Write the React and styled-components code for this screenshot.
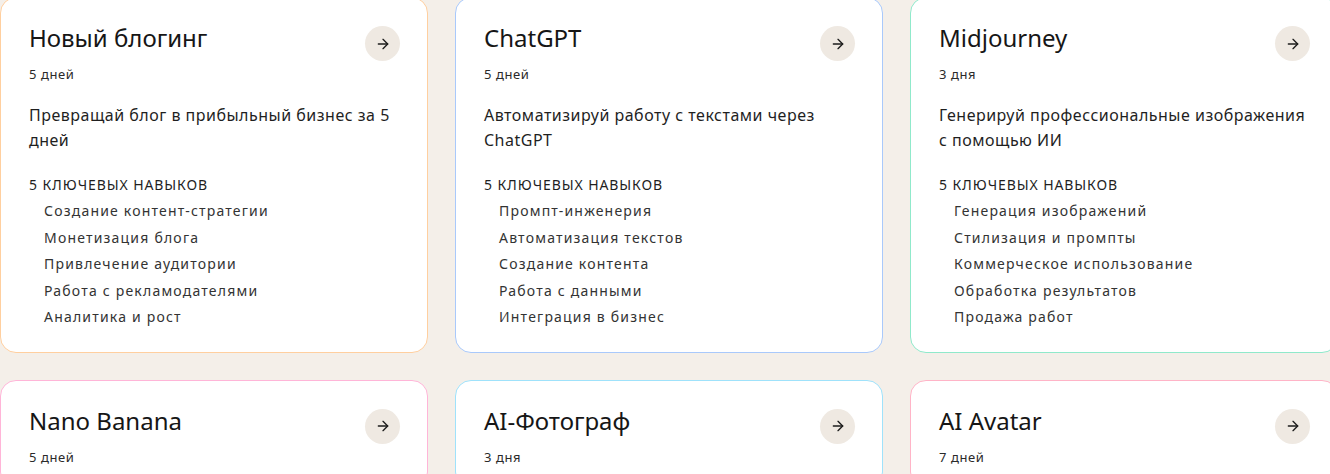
import styled, { createGlobalStyle } from "styled-components";
import { ArrowRight } from "lucide-react";

const GlobalStyle = createGlobalStyle`
  html, body {
    margin: 0;
    padding: 0;
    background-color: #f4efe9;
    overflow: hidden;
  }
  body {
    font-family: "Noto Sans", "DejaVu Sans", sans-serif;
    color: #1c1c1c;
  }
`;

const Grid = styled.div`
  display: grid;
  grid-template-columns: repeat(3, 428px);
  gap: 27px;
  margin-top: -3px;
  width: 1340px;
`;

const Card = styled.div`
  background-color: #ffffff;
  border: 1px solid ${(p) => p.$accent};
  border-radius: 16px;
  padding: 24px 27px 21px 28px;
  box-sizing: border-box;
`;

const Header = styled.div`
  display: flex;
  justify-content: space-between;
  align-items: flex-start;
`;

const Title = styled.h3`
  margin: 0;
  font-size: 24px;
  line-height: 32px;
  font-weight: 400;
  color: #161616;
`;

const ArrowButton = styled.button`
  width: 35px;
  height: 35px;
  margin-top: 4px;
  border: none;
  border-radius: 50%;
  background-color: #efe9e2;
  color: #1c1c1c;
  display: flex;
  align-items: center;
  justify-content: center;
  padding: 0;
  flex-shrink: 0;
`;

const Duration = styled.div`
  margin-top: 4px;
  font-size: 13px;
  line-height: 18px;
  letter-spacing: 0.6px;
  color: #2a2a2a;
`;

const Description = styled.p`
  margin: 20px 0 0;
  font-size: 16px;
  line-height: 25px;
  letter-spacing: 0.5px;
  color: #1f1f1f;
`;

const SkillsTitle = styled.div`
  margin-top: 22px;
  font-size: 14px;
  line-height: 20px;
  text-transform: uppercase;
  letter-spacing: 0.9px;
  color: #1f1f1f;
`;

const SkillList = styled.ul`
  list-style: none;
  margin: 3px 0 0;
  padding: 0 0 0 15px;
`;

const Skill = styled.li`
  font-size: 14px;
  line-height: 26.5px;
  letter-spacing: 1.2px;
  color: #333333;
`;

const courses = [
  {
    title: "Новый блогинг",
    duration: "5 дней",
    accent: "#ffcf9f",
    description: "Превращай блог в прибыльный бизнес за 5 дней",
    skills: [
      "Создание контент-стратегии",
      "Монетизация блога",
      "Привлечение аудитории",
      "Работа с рекламодателями",
      "Аналитика и рост",
    ],
  },
  {
    title: "ChatGPT",
    duration: "5 дней",
    accent: "#a9c9fb",
    description: "Автоматизируй работу с текстами через ChatGPT",
    skills: [
      "Промпт-инженерия",
      "Автоматизация текстов",
      "Создание контента",
      "Работа с данными",
      "Интеграция в бизнес",
    ],
  },
  {
    title: "Midjourney",
    duration: "3 дня",
    accent: "#90e9cb",
    description: "Генерируй профессиональные изображения с помощью ИИ",
    skills: [
      "Генерация изображений",
      "Стилизация и промпты",
      "Коммерческое использование",
      "Обработка результатов",
      "Продажа работ",
    ],
  },
  {
    title: "Nano Banana",
    duration: "5 дней",
    accent: "#ffb5d8",
    description: "",
    skills: [],
  },
  {
    title: "AI-Фотограф",
    duration: "3 дня",
    accent: "#9fe2fb",
    description: "",
    skills: [],
  },
  {
    title: "AI Avatar",
    duration: "7 дней",
    accent: "#ffb4c7",
    description: "",
    skills: [],
  },
];

const CourseCard = ({ course }) => (
  <Card $accent={course.accent}>
    <Header>
      <Title>{course.title}</Title>
      <ArrowButton>
        <ArrowRight size={16} strokeWidth={2} />
      </ArrowButton>
    </Header>
    <Duration>{course.duration}</Duration>
    {course.description && <Description>{course.description}</Description>}
    {course.skills.length > 0 && (
      <>
        <SkillsTitle>{course.skills.length} ключевых навыков</SkillsTitle>
        <SkillList>
          {course.skills.map((s) => (
            <Skill key={s}>{s}</Skill>
          ))}
        </SkillList>
      </>
    )}
  </Card>
);

const App = () => {
  return (
    <>
      <GlobalStyle />
      <Grid>
        {courses.map((c) => (
          <CourseCard key={c.title} course={c} />
        ))}
      </Grid>
    </>
  );
};

export default App;
